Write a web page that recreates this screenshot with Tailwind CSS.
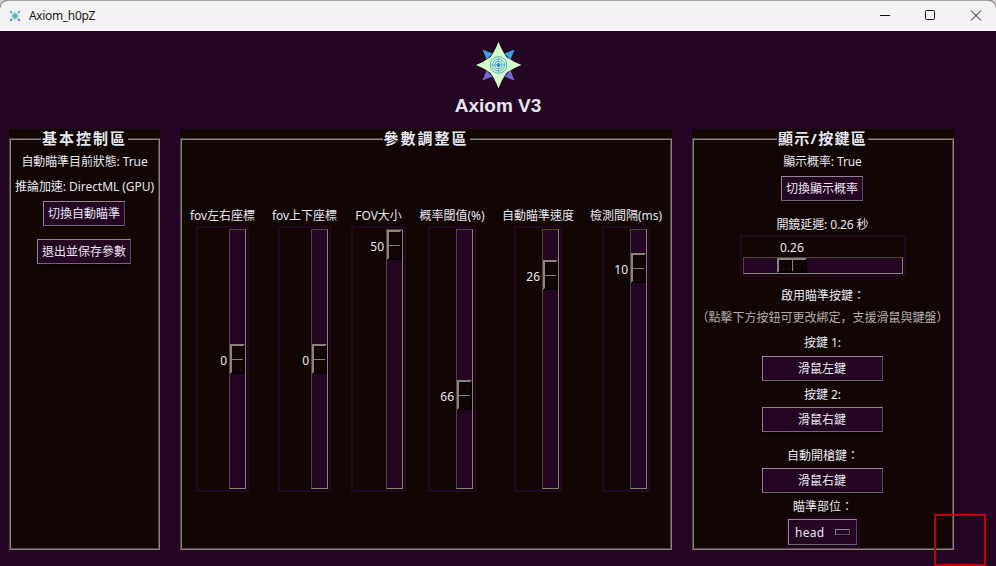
<!DOCTYPE html>
<html lang="zh-Hant">
<head>
<meta charset="utf-8">
<title>Axiom_h0pZ</title>
<script src="https://cdn.jsdelivr.net/npm/@tailwindcss/browser@4"></script>
</head>
<body class="w-[996px] h-[566px] overflow-hidden bg-[#d0d0d0] font-['Noto_Sans','Noto_Sans_CJK_TC',sans-serif] text-[12px] leading-[16px] text-[#e6e6f0]">
<div class="relative flex h-[566px] w-[996px] flex-col overflow-hidden rounded-t-[8px] bg-[#250524]">
  <header class="flex h-[31px] shrink-0 items-center border-t border-[#a8a8a8] bg-[#f3f3f3] text-[#1a1a1a] rounded-t-[8px]">
    <svg class="ml-[9px] h-[12px] w-[12px]" viewBox="0 0 12 12">
      <path d="M6 0L7.5 4.5L12 6L7.5 7.5L6 12L4.5 7.5L0 6L4.5 4.5Z" fill="#b9f0c0"/>
      <path d="M.5.5L4 2L2 4ZM11.500 .5L10 4L8 2Z" fill="#4aa5e8"/>
      <path d="M.5 11.500L2 8L4 10ZM11.500 11.500L8 10L10 8Z" fill="#7b70dc"/>
      <circle cx="6" cy="6" r="2.700" fill="#64b3c4"/>
    </svg>
    <span class="ml-[8px] tracking-[-0.35px]">Axiom_h0pZ</span>
    <svg class="ml-auto h-[30px] w-[136px]" viewBox="0 0 136 30" fill="none" stroke="#111" stroke-width="1">
      <path d="M20 14.500H30"/>
      <rect x="65.500" y="9.500" width="9" height="9" rx="1"/>
      <path d="M111 9.500L121 19.500M121 9.500L111 19.500"/>
    </svg>
  </header>

  <div class="flex h-[98px] shrink-0 flex-col items-center pt-[10px]">
    <svg class="h-[48px] w-[48px]" viewBox="0 0 48 48">
      <path d="M8.500 8.500L18.500 12.500L12.500 18.500ZM40.500 8.500L36.500 18.500L30.500 12.500Z" fill="#3b9fe6"/>
      <path d="M8.500 39.500L12.500 29.500L18.500 35.500ZM40.500 39.500L30.500 35.500L36.500 29.500Z" fill="#7668d4"/>
      <path d="M24.500 .7Q28 10 32.500 16Q39 21 47.500 24Q39 27 32.500 32Q28 38 24.500 47.500Q21 38 16.500 32Q10 27 2 24Q10 21 16.500 16Q21 10 24.500 .7Z" fill="#d3fcc8"/>
      <g fill="none" stroke="#5aa6cf" stroke-width="1">
        <circle cx="24.500" cy="24" r="8.300"/>
        <circle cx="24.500" cy="24" r="6"/>
        <circle cx="24.500" cy="24" r="3.800"/>
        <path d="M16.500 24H32.500M24.500 16V32" stroke-width=".7"/>
      </g>
      <circle cx="24.500" cy="24" r="1.900" fill="#3184e0"/>
    </svg>
    <h1 class="mt-[5px] font-['Liberation_Sans',sans-serif] text-[19px] font-bold leading-[24px]">Axiom V3</h1>
  </div>

  <main class="flex h-[421px] shrink-0 pl-[9px]">
    <section class="flex w-[151px] flex-col bg-[#120605]">
      <div class="mt-[9px] flex h-[412px] flex-col items-center border border-[#4f4541] border-b-[#8c8280] border-r-[#8c8280]">
        <div class="flex h-full w-full flex-col items-center border border-[#8c8280] border-b-[#4f4541] border-r-[#4f4541] [&>*]:shrink-0 [&>p]:h-[16px]">
          <h2 class="mt-[-11px] h-[20px] w-[87px] whitespace-nowrap bg-[#120605] pl-px text-[15px] font-bold leading-[19px] tracking-[2px]">基本控制區</h2>
          <p class="mt-[5px] whitespace-nowrap tracking-[-0.1px]">自動瞄準目前狀態: True</p>
          <p class="mt-[9px] whitespace-nowrap tracking-[-0.05px]">推論加速: DirectML (GPU)</p>
          <button class="mr-px mt-[6px] h-[25px] w-[82px] whitespace-nowrap border border-[#94849a] border-b-[#786080] border-r-[#604868] bg-[#250622] shadow-[1px_1px_0_#000]">切換自動瞄準</button>
          <button class="mr-px mt-[13px] h-[25px] w-[94px] whitespace-nowrap border border-[#94849a] border-b-[#786080] border-r-[#604868] bg-[#250622] shadow-[1px_1px_0_#000]">退出並保存參數</button>
        </div>
      </div>
    </section>

    <section class="ml-[20px] flex w-[492px] flex-col bg-[#120605]">
      <div class="mt-[9px] flex h-[412px] flex-col border border-[#4f4541] border-b-[#8c8280] border-r-[#8c8280]">
        <div class="flex h-full w-full flex-col items-center border border-[#8c8280] border-b-[#4f4541] border-r-[#4f4541]">
          <h2 class="mt-[-11px] h-[20px] w-[87px] whitespace-nowrap bg-[#120605] pl-px text-[15px] font-bold leading-[19px] tracking-[2px]">參數調整區</h2>
          <div id="sliders" class="mt-[59px] flex w-full"></div>
        </div>
      </div>
    </section>

    <section class="ml-[20px] flex w-[262px] flex-col bg-[#120605]">
      <div class="mt-[9px] flex h-[412px] flex-col border border-[#4f4541] border-b-[#8c8280] border-r-[#8c8280]">
        <div class="flex h-full w-full flex-col items-center border border-[#8c8280] border-b-[#4f4541] border-r-[#4f4541] [&>*]:shrink-0 [&>p]:h-[16px]">
          <h2 class="mr-px mt-[-11px] h-[20px] w-[91px] whitespace-nowrap bg-[#120605] pl-px text-[15px] font-bold leading-[19px] tracking-[1.300px]">顯示/按鍵區</h2>
          <p class="mr-px mt-[5px] whitespace-nowrap tracking-[-0.1px]">顯示概率: True</p>
          <button class="mr-[2px] mt-[6px] h-[25px] w-[82px] whitespace-nowrap border border-[#94849a] border-b-[#786080] border-r-[#604868] bg-[#250622] shadow-[1px_1px_0_#000]">切換顯示概率</button>
          <p class="mr-px mt-[16px] whitespace-nowrap tracking-[-0.1px]">開鏡延遲: 0.26 秒</p>
          <div class="mt-[2px] h-[42px] w-[166px] border-2 border-[#250622] px-px">
            <div class="pl-[37px] pt-[3px] leading-[15px]">0.26</div>
            <div class="mt-[2px] h-[17px] w-[160px] border border-[#4f4541] border-b-[#8c8280] border-r-[#8c8280] bg-[#250622] pl-[33px]">
              <div class="flex h-[15px] w-[30px] border-2 border-[#8c8280] border-b-black border-r-black bg-[#120605]">
                <div class="ml-[12px] h-full w-[2px] border-l border-r border-l-black border-r-[#8c8280]"></div>
              </div>
            </div>
          </div>
          <p class="mt-[11px] whitespace-nowrap">啟用瞄準按鍵<span lang="ja" class="font-['Noto_Sans_CJK_JP'] leading-none">：</span></p>
          <p class="mr-px mt-[5px] whitespace-nowrap font-['Noto_Sans_CJK_TC',sans-serif] text-[#b0acac]">（點擊下方按鈕可更改綁定<span lang="ja" class="font-['Noto_Sans_CJK_JP']">，</span>支援滑鼠與鍵盤）</p>
          <p class="mr-px mt-[10px] whitespace-nowrap">按鍵 1:</p>
          <button class="mr-[2px] mt-[5px] h-[25px] w-[121px] whitespace-nowrap border border-[#94849a] border-b-[#786080] border-r-[#604868] bg-[#250622] shadow-[1px_1px_0_#000]">滑鼠左鍵</button>
          <p class="mr-px mt-[6px] whitespace-nowrap">按鍵 2:</p>
          <button class="mr-[2px] mt-[4px] h-[25px] w-[121px] whitespace-nowrap border border-[#94849a] border-b-[#786080] border-r-[#604868] bg-[#250622] shadow-[1px_1px_0_#000]">滑鼠右鍵</button>
          <p class="mt-[16px] whitespace-nowrap">自動開槍鍵<span lang="ja" class="font-['Noto_Sans_CJK_JP'] leading-none">：</span></p>
          <button class="mr-[2px] mt-[4px] h-[25px] w-[121px] whitespace-nowrap border border-[#94849a] border-b-[#786080] border-r-[#604868] bg-[#250622] shadow-[1px_1px_0_#000]">滑鼠右鍵</button>
          <p class="mt-[6px] whitespace-nowrap">瞄準部位<span lang="ja" class="font-['Noto_Sans_CJK_JP'] leading-none">：</span></p>
          <div class="mt-[2px] h-[31px] w-[74px] bg-[#250622] pl-[2px] pt-[2px]">
            <div class="flex h-[26px] w-[69px] items-center border border-[#94849a] border-b-[#786080] border-r-[#604868] pl-[6px] shadow-[1px_1px_0_#000]">
              <span class="w-[40px] pt-[2px] tracking-[0.25px]">head</span>
              <span class="mb-px h-[6px] w-[15px] border border-[#94849a] border-b-[#604868] border-r-[#604868] shadow-[1px_1px_0_#000]"></span>
            </div>
          </div>
        </div>
      </div>
    </section>
  </main>
  <div class="absolute left-[934px] top-[514px] h-[52px] w-[52px] rounded-[1px] border-2 border-[#c00008]"></div>
</div>
<script>
  // Column width, frame width, label, value, thumb offset inside the trough
  const sliders = [
    [81, 53, 'fov左右座標', 0, 114],
    [83, 53, 'fov上下座標', 0, 114],
    [65, 55, 'FOV大小', 50, 0],
    [82, 48, '概率閾值(%)', 66, 150],
    [90, 48, '自動瞄準速度', 26, 30],
    [86, 48, '檢測間隔(ms)', 10, 23],
  ];
  document.getElementById('sliders').innerHTML = sliders.map(([col, frame, label, value, top]) => `
    <div class="flex shrink-0 flex-col items-center" style="width:${col}px">
      <div class="flex h-[18px] w-full justify-center"><span class="whitespace-nowrap">${label}</span></div>
      <div class="flex h-[266px] justify-end border-2 border-[#250622] pr-px pt-px" style="width:${frame}px">
        <div class="pr-[2px]" style="padding-top:${top + 10}px">${value}</div>
        <div class="h-[260px] w-[17px] border border-[#4f4541] border-b-[#8c8280] border-r-[#8c8280] bg-[#250622]" style="padding-top:${top}px">
          <div class="h-[30px] w-[15px] border-2 border-[#8c8280] border-b-black border-r-black bg-[#120605] pt-[12px]">
            <div class="h-[2px] border-b border-t border-b-[#8c8280] border-t-black"></div>
          </div>
        </div>
      </div>
    </div>`).join('');
</script>
</body>
</html>
